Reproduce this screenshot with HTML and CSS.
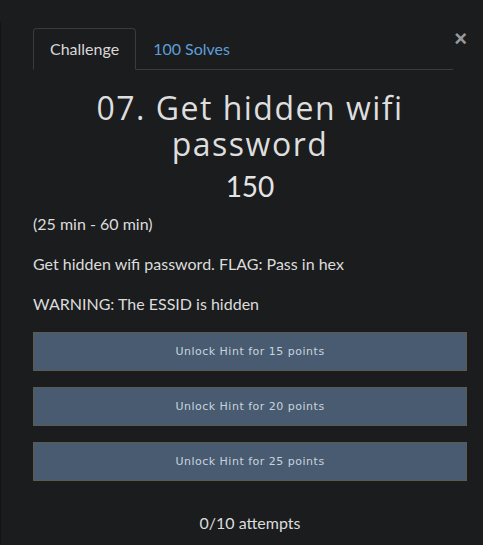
FILE: index.html
```html
<!DOCTYPE html>
<html>
<head>
<meta charset="utf-8">
<link rel="stylesheet" href="styles.css">
</head>
<body>
<div class="modal">
  <div class="modal-body">
    <div class="head">
      <ul class="tabs">
        <li class="tab active">Challenge</li>
        <li class="tab link">100 Solves</li>
      </ul>
      <button class="close">×</button>
    </div>
    <h3 class="title">07. Get hidden wifi password</h3>
    <h4 class="value">150</h4>
    <div class="desc">
      <p>(25 min - 60 min)</p>
      <p>Get hidden wifi password. FLAG: Pass in hex</p>
      <p>WARNING: The ESSID is hidden</p>
    </div>
    <div class="hints">
      <button class="hint">Unlock Hint for 15 points</button>
      <button class="hint">Unlock Hint for 20 points</button>
      <button class="hint">Unlock Hint for 25 points</button>
    </div>
    <p class="attempts">0/10 attempts</p>
  </div>
</div>
</body>
</html>
```
FILE: styles.css
```css
html, body {
  margin: 0;
  padding: 0;
  background: #1b1c1e;
  height: 100%;
}
body {
  font-family: Lato, "Noto Sans", sans-serif;
  color: #dcdcdc;
}
.modal {
  margin-top: 22px;
  border-left: 1px solid #141414;
  min-height: 523px;
}
.modal-body {
  padding: 6px 16px 0 32px;
}
.head {
  display: flex;
  align-items: flex-start;
}
.tabs {
  flex: 1;
  display: flex;
  list-style: none;
  margin: 0;
  padding: 0;
  border-bottom: 1px solid #3a3b3d;
}
.tab {
  font-size: 16px;
  line-height: 24px;
  padding: 8px 16px 8px 16px;
  margin-bottom: -1px;
  border: 1px solid transparent;
  border-radius: 4px 4px 0 0;
}
.tab.active {
  border-color: #3a3b3d;
  border-bottom-color: #1b1c1e;
  color: #d8d8d8;
}
.tab.link {
  color: #5b9fd9;
  padding-left: 16px;
}
.close {
  background: none;
  border: 0;
  padding: 0;
  margin: 0;
  width: 14px;
  font-family: "Liberation Sans", sans-serif;
  font-size: 22px;
  font-weight: 700;
  line-height: 22px;
  color: #9a9a9a;
  text-align: right;
}
.title {
  font-family: "Open Sans", sans-serif;
  font-weight: 400;
  font-size: 32px;
  line-height: 36px;
  letter-spacing: 1.5px;
  text-align: center;
  color: #dedede;
  margin: 20px 40px 0;
}
.value {
  font-weight: 400;
  font-size: 28px;
  line-height: 34px;
  text-align: center;
  margin: 7px 0 0;
  color: #e4e4e4;
}
.desc {
  margin-top: 9px;
}
.desc p {
  font-size: 16px;
  line-height: 24px;
  margin: 0 0 16px;
}
.hints {
  display: flex;
  flex-direction: column;
  gap: 16px;
  margin-top: 11px;
}
.hint {
  display: block;
  width: 100%;
  height: 39px;
  background: #485b71;
  border: 1px solid #5c5b4f;
  color: #c9d3de;
  font-family: "DejaVu Sans", sans-serif;
  font-size: 11px;
  letter-spacing: 0.5px;
}
.attempts {
  text-align: center;
  font-size: 16px;
  line-height: 24px;
  margin: 30px 0 0;
}
```
